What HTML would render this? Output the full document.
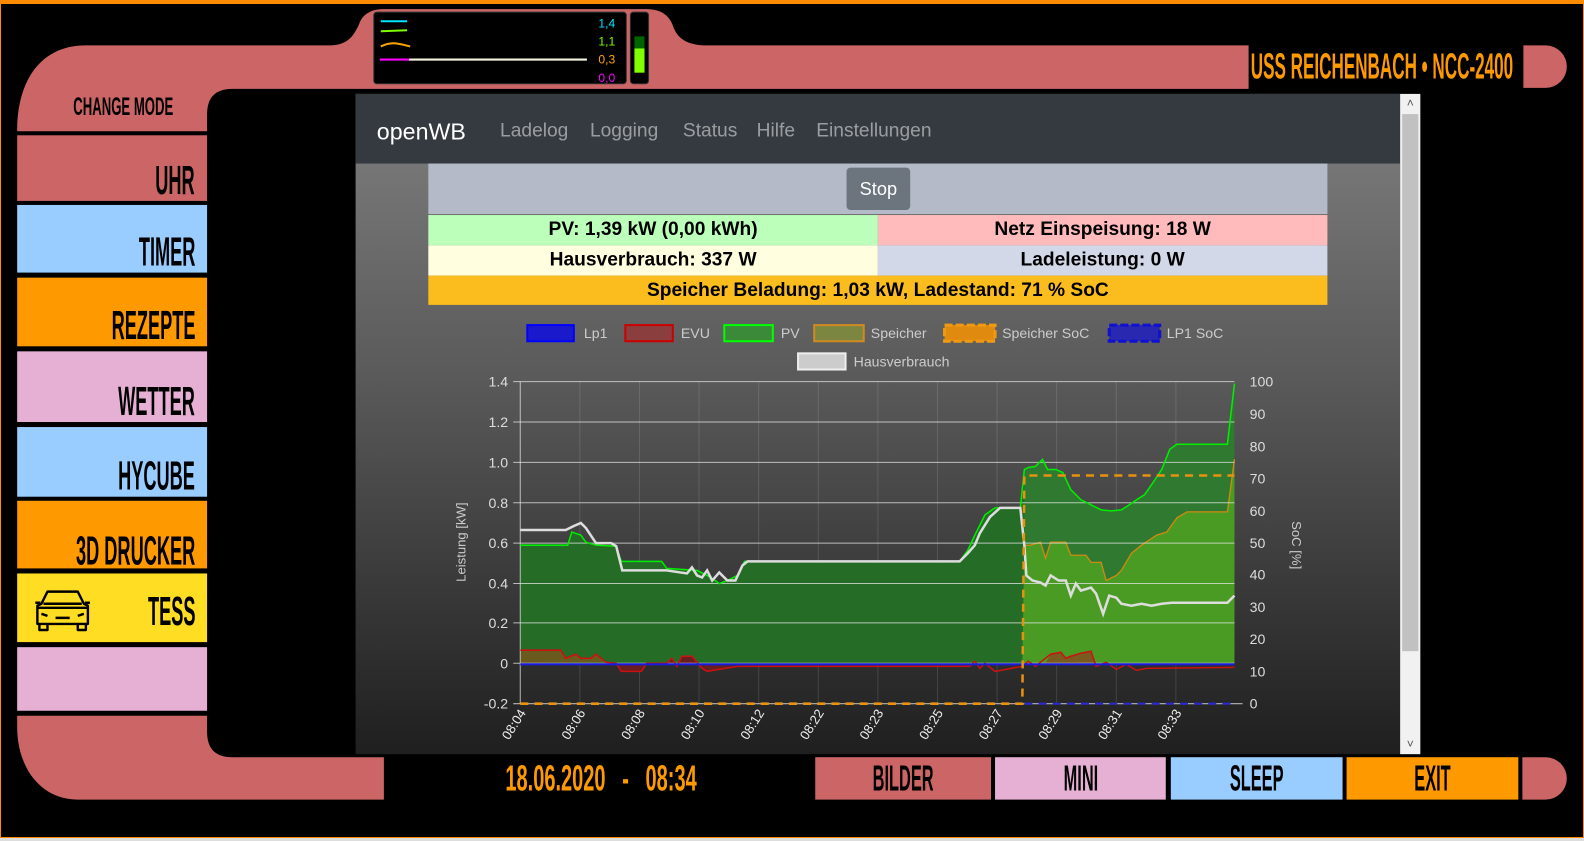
<!DOCTYPE html>
<html><head><meta charset="utf-8">
<style>
html,body{margin:0;padding:0;background:#000;overflow:hidden;width:1584px;height:841px}
#w{position:absolute;left:0;top:0;width:1568px;height:833px;transform:scale(1.0102,1.0096);transform-origin:0 0;background:#000}
.lc{position:absolute;font-family:"Liberation Sans Narrow","Liberation Sans",sans-serif;font-weight:bold;color:#000;white-space:nowrap}
.btn{position:absolute;left:17px;width:188px;overflow:hidden}
.btn .t{position:absolute;right:12px;height:40px;line-height:40px;font-size:40px;transform:scaleX(.45);transform-origin:right center;white-space:nowrap}
.ct{position:absolute;transform:translateX(-50%) scaleX(.45);white-space:nowrap}
.bb{position:absolute;top:750px;height:42px;overflow:hidden}
.bb .ct{left:50%;top:1px;font-size:36px;line-height:40px}
.nav{position:absolute;top:93px;left:352px;width:1034px;height:69px;background:#343a40;font-family:"Liberation Sans",sans-serif}
.nav div{position:absolute;top:26px;font-size:19px;color:rgba(255,255,255,.5)}
.row{position:absolute;font-family:"Liberation Sans Narrow","Liberation Sans",sans-serif;font-weight:bold;font-size:19px;text-align:center;line-height:30px;color:#000}
</style></head><body>
<div id="w">
<svg width="1568" height="833" style="position:absolute;left:0;top:0">
<path fill="#cc6666" d="M17,130 C17,80 40,45 85,45 L325,45 C345,45 350,35 355,25 Q360,9 380,9 L640,9 Q660,9 666,25 C670,38 680,45 700,45 L1236,45 L1236,88 L230,88 Q205,88 205,113 L205,130 Z"/>
<path fill="#cc6666" d="M1508,45 L1530,45 A21,21 0 0 1 1530,87 L1508,87 Z"/>
<path fill="#cc6666" d="M17,709 L205,709 L205,725 Q205,750 230,750 L380,750 L380,792 L77,792 C40,792 17,760 17,720 Z"/>
<path fill="#cc6666" d="M1507,750 L1530,750 A21,21 0 0 1 1530,792 L1507,792 Z"/>
<rect x="370" y="12" width="250" height="71" rx="3" fill="#000" stroke="#333"/>
<rect x="624" y="12" width="18" height="71" rx="3" fill="#000" stroke="#333"/>
<rect x="628" y="36" width="10" height="12" fill="#006400"/>
<rect x="628" y="48" width="10" height="24" fill="#80ff00"/>
<line x1="377" y1="21" x2="403" y2="21" stroke="#00e5ff" stroke-width="2"/>
<line x1="377" y1="31" x2="403" y2="30" stroke="#7cfc00" stroke-width="2"/>
<path d="M377,46 Q385,42 392,43 T406,46" fill="none" stroke="#ffa500" stroke-width="2"/>
<line x1="403" y1="59" x2="581" y2="59" stroke="#f5f5dc" stroke-width="2"/>
<line x1="376" y1="59" x2="405" y2="59" stroke="#ff00ff" stroke-width="2"/>
<g font-family="Liberation Sans Narrow,Liberation Sans,sans-serif" font-size="12" text-anchor="end">
<text x="609" y="27" fill="#00e5ff">1,4</text>
<text x="609" y="45" fill="#7cfc00">1,1</text>
<text x="609" y="63" fill="#ffa500">0,3</text>
<text x="609" y="81" fill="#ff00ff">0,0</text>
</g>
</svg>
<div class="lc ct" style="left:122px;top:91px;font-size:25px;line-height:30px;transform:translateX(-50%) scaleX(.52)">CHANGE MODE</div>
<div class="lc btn" style="top:134px;height:65px;background:#cc6666"><div class="t" style="bottom:0">UHR</div></div>
<div class="lc btn" style="top:203px;height:67px;background:#99ccff"><div class="t" style="bottom:0">TIMER</div></div>
<div class="lc btn" style="top:275px;height:68px;background:#ff9900"><div class="t" style="bottom:0">REZEPTE</div></div>
<div class="lc btn" style="top:348px;height:70px;background:#e6b0d4"><div class="t" style="bottom:0">WETTER</div></div>
<div class="lc btn" style="top:423px;height:69px;background:#99ccff"><div class="t" style="bottom:0">HYCUBE</div></div>
<div class="lc btn" style="top:496px;height:67px;background:#ff9900"><div class="t" style="bottom:-3px">3D DRUCKER</div></div>
<div class="lc btn" style="top:568px;height:68px;background:#ffdd22"><div class="t" style="bottom:10px">TESS</div></div>
<svg style="position:absolute;left:33px;top:582px" width="58" height="44" viewBox="0 0 58 44" fill="none" stroke="#000" stroke-width="2.4" stroke-linejoin="round">
<path d="M14,4 L44,4 L50,16 L54,18 L54,36 L4,36 L4,18 L8,16 Z"/>
<path d="M10,16 L48,16"/>
<path d="M4,20 L54,20"/>
<path d="M8,26 L14,28 M50,26 L44,28 M22,30 L36,30"/>
<path d="M6,36 L6,42 L14,42 L14,36 M44,36 L44,42 L52,42 L52,36"/>
<path d="M2,15 L7,15 M51,15 L56,15"/>
</svg>
<div class="lc btn" style="top:641px;height:63px;background:#e6b0d4"></div>
<div class="lc ct" style="left:595px;top:751px;font-size:36px;line-height:40px;color:#ff9900;transform:translateX(-50%) scaleX(.55)">18.06.2020 &nbsp;&nbsp;- &nbsp;&nbsp;08:34</div>
<div class="lc ct" style="left:1368px;top:46px;font-size:36px;line-height:40px;color:#ff9900;transform:translateX(-50%) scaleX(.47)">USS REICHENBACH &#8226; NCC-2400</div>
<div class="lc bb" style="left:807px;width:174px;background:#cc6666"><div class="ct">BILDER</div></div>
<div class="lc bb" style="left:985px;width:169px;background:#e6b0d4"><div class="ct">MINI</div></div>
<div class="lc bb" style="left:1159px;width:170px;background:#99ccff"><div class="ct">SLEEP</div></div>
<div class="lc bb" style="left:1333px;width:170px;background:#ff9900"><div class="ct">EXIT</div></div>

<div style="position:absolute;left:352px;top:93px;width:1034px;height:654px;background:linear-gradient(#767676 69px,#5a5a5a 280px,#1f1f1f 654px)"></div>
<div class="nav">
<div style="left:21px;top:24px;font-size:23px;color:#fff">openWB</div>
<div style="left:143px">Ladelog</div>
<div style="left:232px">Logging</div>
<div style="left:324px">Status</div>
<div style="left:397px">Hilfe</div>
<div style="left:456px">Einstellungen</div>
</div>
<div style="position:absolute;left:1386px;top:93px;width:20px;height:654px;background:#f1f1f1"></div>
<div style="position:absolute;left:1388px;top:113px;width:16px;height:532px;background:#c1c1c1"></div>
<div style="position:absolute;left:1386px;top:95px;width:20px;text-align:center;font:12px 'Liberation Sans',sans-serif;color:#555">&#708;</div>
<div style="position:absolute;left:1386px;top:730px;width:20px;text-align:center;font:12px 'Liberation Sans',sans-serif;color:#555">&#709;</div>

<div style="position:absolute;left:424px;top:162px;width:890px;height:50px;background:#b5bac8"></div>
<div style="position:absolute;left:838px;top:166px;width:63px;height:42px;background:#6c757d;border-radius:4px;color:#fff;font:18px 'Liberation Sans',sans-serif;text-align:center;line-height:42px">Stop</div>
<div class="row" style="left:424px;top:213px;width:445px;background:#bbffbb">PV: 1,39 kW (0,00 kWh)</div>
<div class="row" style="left:869px;top:213px;width:445px;background:#ffbbbb">Netz Einspeisung: 18 W</div>
<div class="row" style="left:424px;top:243px;width:445px;background:#ffffe0">Hausverbrauch: 337 W</div>
<div class="row" style="left:869px;top:243px;width:445px;background:#d2d8e8">Ladeleistung: 0 W</div>
<div class="row" style="left:424px;top:273px;width:890px;height:29px;line-height:29px;background:#fbbd1e">Speicher Beladung: 1,03 kW, Ladestand: 71 % SoC</div>

<svg width="1568" height="833" style="position:absolute;left:0;top:0">
<g>
<rect x="522" y="322" width="46" height="16" fill="#1a1acc" stroke="#0000ff" stroke-width="2"/>
<rect x="619" y="322" width="47" height="16" fill="#8b3e3e" stroke="#cc0000" stroke-width="2"/>
<rect x="717" y="322" width="48" height="16" fill="#3a8a3a" stroke="#00ff00" stroke-width="2"/>
<rect x="806" y="322" width="49" height="16" fill="#7b8640" stroke="#d08a20" stroke-width="2"/>
<rect x="935" y="322" width="50" height="16" fill="#e08a10" stroke="#f09a10" stroke-width="3" stroke-dasharray="8,3"/>
<rect x="1098" y="322" width="50" height="16" fill="#2828b0" stroke="#1010d0" stroke-width="3" stroke-dasharray="8,3"/>
<rect x="790" y="350" width="47" height="16" fill="#cccccc" stroke="#eeeeee" stroke-width="2"/>
</g>
<g font-family="Liberation Sans,sans-serif" font-size="14" fill="#cccccc">
<text x="578" y="335">Lp1</text><text x="674" y="335">EVU</text><text x="773" y="335">PV</text>
<text x="862" y="335">Speicher</text><text x="992" y="335">Speicher SoC</text><text x="1155" y="335">LP1 SoC</text>
<text x="845" y="363">Hausverbrauch</text>
</g>
<g stroke="rgba(255,255,255,0.12)" stroke-width="1">
<line x1="574" y1="378" x2="574" y2="697"/><line x1="633" y1="378" x2="633" y2="697"/><line x1="692" y1="378" x2="692" y2="697"/><line x1="751" y1="378" x2="751" y2="697"/><line x1="810" y1="378" x2="810" y2="697"/><line x1="869" y1="378" x2="869" y2="697"/><line x1="928" y1="378" x2="928" y2="697"/><line x1="987" y1="378" x2="987" y2="697"/><line x1="1046" y1="378" x2="1046" y2="697"/><line x1="1105" y1="378" x2="1105" y2="697"/><line x1="1164" y1="378" x2="1164" y2="697"/>
</g>
<polygon fill="#256d27" points="515,540 562,540 566,527 575,530 580,537 590,540 610,541 615,556 655,556 660,563 690,565 700,570 708,575 712,578 720,575 730,570 737,556 750,556 950,556 958,545 965,530 975,510 985,503 1010,503 1014,465 1018,463 1025,462 1032,455 1037,465 1045,465 1052,468 1060,485 1070,495 1080,500 1090,505 1100,506 1110,505 1118,500 1125,495 1133,490 1140,480 1150,465 1158,445 1165,440 1215,440 1222,380 1222,657 515,657"/>
<polygon fill="#2f7a30" points="1014,465 1018,463 1025,462 1032,455 1037,465 1045,465 1052,468 1060,485 1070,495 1080,500 1090,505 1100,506 1110,505 1118,500 1125,495 1133,490 1140,480 1150,465 1158,445 1165,440 1215,440 1222,380 1222,657 1014,657"/>
<polygon fill="#4a9b24" points="1012,657 1014,540 1020,540 1030,537 1035,553 1040,537 1055,537 1060,550 1075,550 1080,557 1090,557 1095,575 1105,570 1110,565 1120,548 1130,540 1145,530 1155,527 1165,513 1175,507 1215,507 1222,455 1222,657"/>
<polyline fill="none" stroke="#d08a10" stroke-width="1.3" points="1014,540 1020,540 1030,537 1035,553 1040,537 1055,537 1060,550 1075,550 1080,557 1090,557 1095,575 1105,570 1110,565 1120,548 1130,540 1145,530 1155,527 1165,513 1175,507 1215,507 1222,455"/>
<polygon fill="#6b5a1e" points="515,657 515,644 555,644 560,652 565,650 570,648 575,652 585,652 590,648 600,656 515,657"/>
<polygon fill="#7a5a1e" points="1035,657 1040,648 1050,646 1055,652 1060,650 1070,647 1080,645 1085,657"/>
<polygon fill="#6a1e1e" points="610,657 615,665 635,665 640,657 660,657 665,652 670,660 675,650 685,650 695,662 700,665 730,660 750,660"/>
<g stroke="rgba(230,230,230,0.75)" stroke-width="1">
<line x1="508" y1="378" x2="1222" y2="378"/><line x1="508" y1="418" x2="1222" y2="418"/><line x1="508" y1="458" x2="1222" y2="458"/><line x1="508" y1="498" x2="1222" y2="498"/><line x1="508" y1="538" x2="1222" y2="538"/><line x1="508" y1="578" x2="1222" y2="578"/><line x1="508" y1="617" x2="1222" y2="617"/><line x1="508" y1="657" x2="1222" y2="657"/><line x1="508" y1="697" x2="1230" y2="697"/>
<line x1="515" y1="378" x2="515" y2="697"/>
</g>
<polyline fill="none" stroke="#cc1111" stroke-width="1.5" points="515,644 555,644 560,652 565,650 570,648 575,652 585,652 590,648 600,656 610,657 615,665 635,665 640,657 660,657 665,652 670,660 675,650 685,650 695,662 700,665 730,660 960,660 965,655 970,662 975,657 985,665 1012,660 1018,655 1025,660 1040,648 1050,646 1055,652 1060,650 1070,647 1080,645 1085,660 1095,656 1105,663 1115,658 1125,664 1135,662 1222,661"/>
<line x1="515" y1="658" x2="1222" y2="658" stroke="#1a1add" stroke-width="2"/>
<polyline fill="none" stroke="#00ee00" stroke-width="1.5" points="515,540 562,540 566,527 575,530 580,537 590,540 610,541 615,556 655,556 660,563 690,565 700,570 708,575 712,578 720,575 730,570 737,556 750,556 950,556 958,545 965,530 975,510 985,503 1010,503 1014,465 1018,463 1025,462 1032,455 1037,465 1045,465 1052,468 1060,485 1070,495 1080,500 1090,505 1100,506 1110,505 1118,500 1125,495 1133,490 1140,480 1150,465 1158,445 1165,440 1215,440 1222,380"/>
<polyline fill="none" stroke="#dddddd" stroke-width="2.5" points="515,525 560,525 568,521 575,518 580,523 590,538 605,538 610,541 616,565 660,565 680,568 685,562 690,570 695,572 700,565 705,575 712,567 720,575 728,575 735,560 740,556 950,556 958,548 965,540 970,528 980,512 990,503 1010,503 1014,540 1016,570 1022,575 1030,577 1035,580 1040,570 1048,575 1055,575 1060,590 1065,578 1070,585 1080,582 1085,588 1092,608 1098,590 1105,592 1110,598 1120,600 1130,598 1140,600 1150,598 1160,597 1215,597 1222,590"/>
<polyline fill="none" stroke="#e8920f" stroke-width="2.5" stroke-dasharray="8,6" points="515,697 1012,697 1014,471 1222,471"/>
<line x1="1014" y1="697" x2="1222" y2="697" stroke="#2a2acc" stroke-width="2" stroke-dasharray="8,6"/>
<g font-family="Liberation Sans,sans-serif" font-size="14" fill="#dddddd" text-anchor="end">
<text x="503" y="383">1.4</text><text x="503" y="423">1.2</text><text x="503" y="463">1.0</text><text x="503" y="503">0.8</text><text x="503" y="543">0.6</text><text x="503" y="583">0.4</text><text x="503" y="622">0.2</text><text x="503" y="662">0</text><text x="503" y="702">-0.2</text>
</g>
<g font-family="Liberation Sans,sans-serif" font-size="14" fill="#dddddd">
<text x="1237" y="383">100</text><text x="1237" y="415">90</text><text x="1237" y="447">80</text><text x="1237" y="479">70</text><text x="1237" y="511">60</text><text x="1237" y="543">50</text><text x="1237" y="574">40</text><text x="1237" y="606">30</text><text x="1237" y="638">20</text><text x="1237" y="670">10</text><text x="1237" y="702">0</text>
</g>
<text transform="translate(461,537) rotate(-90)" text-anchor="middle" font-family="Liberation Sans,sans-serif" font-size="13" fill="#cccccc">Leistung [kW]</text>
<text transform="translate(1279,540) rotate(90)" text-anchor="middle" font-family="Liberation Sans,sans-serif" font-size="13" fill="#cccccc">SoC [%]</text>
<g font-family="Liberation Sans,sans-serif" font-size="13" fill="#eeeeee" text-anchor="end">
<text transform="translate(521,706) rotate(-58)">08:04</text>
<text transform="translate(580,706) rotate(-58)">08:06</text>
<text transform="translate(639,706) rotate(-58)">08:08</text>
<text transform="translate(698,706) rotate(-58)">08:10</text>
<text transform="translate(757,706) rotate(-58)">08:12</text>
<text transform="translate(816,706) rotate(-58)">08:22</text>
<text transform="translate(875,706) rotate(-58)">08:23</text>
<text transform="translate(934,706) rotate(-58)">08:25</text>
<text transform="translate(993,706) rotate(-58)">08:27</text>
<text transform="translate(1052,706) rotate(-58)">08:29</text>
<text transform="translate(1111,706) rotate(-58)">08:31</text>
<text transform="translate(1170,706) rotate(-58)">08:33</text>
</g>
</svg>
</div>
<div style="position:absolute;left:0;top:0;width:1584px;height:4px;background:#ff8c00"></div>
<div style="position:absolute;left:0;top:0;width:1px;height:841px;background:#ff8c00"></div>
<div style="position:absolute;right:0;top:0;width:1px;height:841px;background:#ff8c00"></div>
<div style="position:absolute;left:0;top:837px;width:1584px;height:1px;background:#ff8c00"></div>
<div style="position:absolute;left:0;top:838px;width:1584px;height:3px;background:#ddd"></div>
</body></html>
